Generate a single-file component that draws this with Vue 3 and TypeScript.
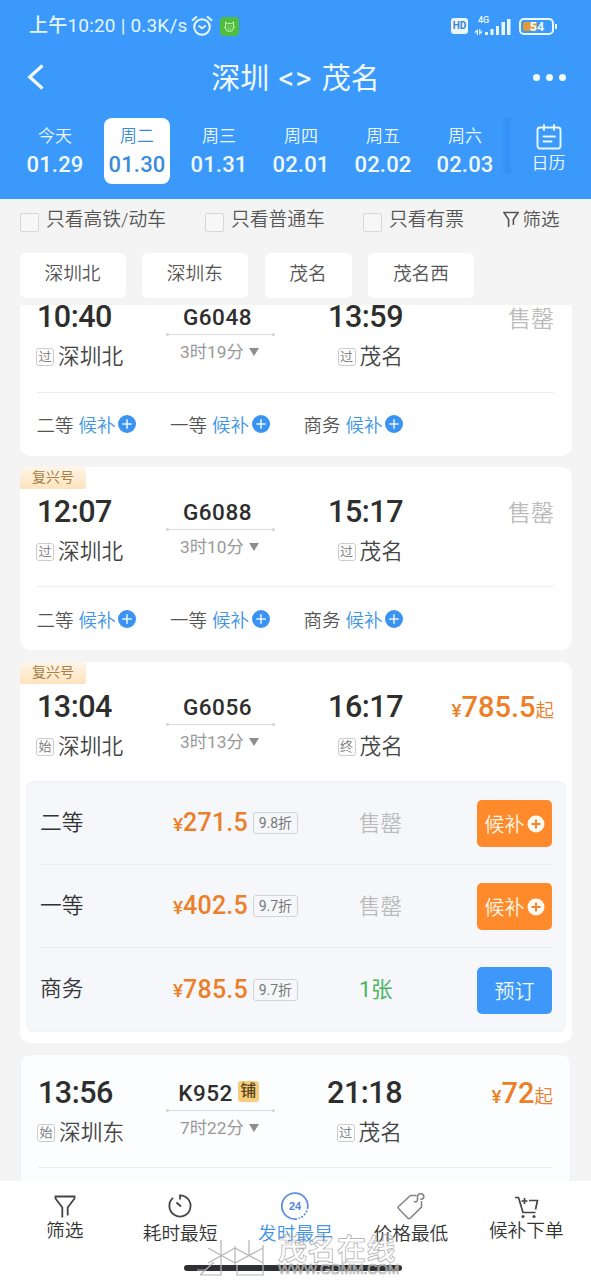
<script setup lang="ts">
interface Day { label: string; date: string; active?: boolean }
interface Seat { name: string; price: string; discount: string; left: string; available: boolean }
interface Train {
  id: string
  suffix?: string
  depart: string
  arrive: string
  from: string
  fromMark: string
  to: string
  toMark: string
  duration: string
  price?: string
  fuxing?: boolean
  kind: 'clipped' | 'waitlist' | 'expanded' | 'viewed'
  seats?: Seat[]
}

const days: Day[] = [
  { label: '今天', date: '01.29' },
  { label: '周二', date: '01.30', active: true },
  { label: '周三', date: '01.31' },
  { label: '周四', date: '02.01' },
  { label: '周五', date: '02.02' },
  { label: '周六', date: '02.03' },
]

const filters = ['只看高铁/动车', '只看普通车', '只看有票']
const stations = ['深圳北', '深圳东', '茂名', '茂名西']
const classes = ['二等', '一等', '商务']

const trains: Train[] = [
  { id: 'G6048', depart: '10:40', arrive: '13:59', from: '深圳北', fromMark: '过', to: '茂名', toMark: '过', duration: '3时19分', kind: 'clipped' },
  { id: 'G6088', depart: '12:07', arrive: '15:17', from: '深圳北', fromMark: '过', to: '茂名', toMark: '过', duration: '3时10分', fuxing: true, kind: 'waitlist' },
  {
    id: 'G6056', depart: '13:04', arrive: '16:17', from: '深圳北', fromMark: '始', to: '茂名', toMark: '终', duration: '3时13分', price: '785.5', fuxing: true, kind: 'expanded',
    seats: [
      { name: '二等', price: '271.5', discount: '9.8折', left: '售罄', available: false },
      { name: '一等', price: '402.5', discount: '9.7折', left: '售罄', available: false },
      { name: '商务', price: '785.5', discount: '9.7折', left: '1张', available: true },
    ],
  },
  { id: 'K952', suffix: '铺', depart: '13:56', arrive: '21:18', from: '深圳东', fromMark: '始', to: '茂名', toMark: '过', duration: '7时22分', price: '72', kind: 'viewed' },
]
</script>

<template>
  <div class="screen">
    <header class="header">
      <div class="status">
        <span class="clock">上午10:20 | 0.3K/s</span>
        <svg class="alarm" width="22" height="22" viewBox="0 0 22 22" fill="none" stroke="#e9f8ff" stroke-width="2" stroke-linecap="round">
          <circle cx="11" cy="12" r="7.8" />
          <path d="M1.500 5.200 5.300 2M20.500 5.200 16.700 2" />
          <path d="m8 11 3 2.300 3.200-2.300" stroke-width="1.800" />
        </svg>
        <svg class="app-badge" width="19" height="19" viewBox="0 0 19 19" fill="none">
          <rect width="19" height="19" rx="4" fill="#50bd3e" />
          <g stroke="#c9f5b8" stroke-width="1">
            <path d="M5.500 5v5.500a4 4 0 0 0 8 0V5l-2 1.500h-4zM4 10.500h1.500M13.500 10.500H15" />
            <path d="M7.500 9h1M10.500 9h1M8 11.500c1 .800 2 .800 3 0" />
          </g>
        </svg>
        <span class="grow"></span>
        <span class="hd">HD</span>
        <span class="cell">
          <span class="net">4G</span>
          <svg width="38" height="17" viewBox="0 0 38 17" fill="#e9f8ff">
            <path d="M4 11v6h-1.200v-2.500H0zM5.200 17v-6h1.200v2.500H9z" />
            <rect x="11" y="14" width="3" height="3" />
            <rect x="16.500" y="11" width="3" height="6" />
            <rect x="22" y="8" width="3" height="9" />
            <rect x="27.500" y="4" width="3.500" height="13" />
            <rect x="33" y="1" width="3.500" height="16" />
          </svg>
        </span>
        <span class="battery"><span class="charge"></span><b>54</b></span>
      </div>

      <div class="title-bar">
        <svg width="18" height="26" viewBox="0 0 18 26" fill="none" stroke="#f2fbff" stroke-width="3.200">
          <path d="M16.500 1.500 3.700 13 16.500 24.500" />
        </svg>
        <h1>深圳 <span class="swap">&lt;&gt;</span> 茂名</h1>
        <div class="more"><i></i><i></i><i></i></div>
      </div>

      <div class="days">
        <div v-for="d in days" :key="d.date" class="day" :class="{ active: d.active }">
          <span class="week">{{ d.label }}</span>
          <span class="date">{{ d.date }}</span>
        </div>
        <div class="calendar">
          <svg width="26" height="26" viewBox="0 0 26 26" fill="none" stroke="#e9f8ff" stroke-width="1.900" stroke-linecap="round">
            <rect x="1.500" y="3.500" width="23" height="21" rx="2.500" />
            <path d="M8 1v5M18 1v5M7.500 12.500h11.500M7.500 17.500h8" />
          </svg>
          <span>日历</span>
        </div>
      </div>
    </header>

    <div class="filters">
      <label v-for="f in filters" :key="f" class="check"><i></i>{{ f }}</label>
      <span class="more-filter">
        <svg width="16" height="17" viewBox="0 0 16 17" fill="none" stroke="#555" stroke-width="1.600">
          <path d="M5.600 16V8.500L1 1.500h14l-4.600 7V14" />
        </svg>筛选
      </span>
    </div>

    <div class="chips">
      <span v-for="s in stations" :key="s" class="chip">{{ s }}</span>
    </div>

    <main class="list">
      <section v-for="t in trains" :key="t.id" class="card" :class="t.kind">
        <span v-if="t.fuxing" class="tag">复兴号</span>
        <div class="trip">
          <div class="stop">
            <b>{{ t.depart }}</b>
            <span class="place"><i>{{ t.fromMark }}</i>{{ t.from }}</span>
          </div>
          <div class="route">
            <span class="number">{{ t.id }}<em v-if="t.suffix">{{ t.suffix }}</em></span>
            <span class="track"></span>
            <span class="duration">{{ t.duration }}<i></i></span>
          </div>
          <div class="stop end">
            <b>{{ t.arrive }}</b>
            <span class="place"><i>{{ t.toMark }}</i>{{ t.to }}</span>
          </div>
          <div v-if="t.price" class="fare"><small>¥</small><b>{{ t.price }}</b><span>起</span></div>
          <div v-else class="sold">售罄</div>
        </div>

        <div v-if="t.seats" class="panel">
          <div v-for="s in t.seats" :key="s.name" class="seat">
            <span class="seat-name">{{ s.name }}</span>
            <span class="seat-price"><small>¥</small><b>{{ s.price }}</b><i>{{ s.discount }}</i></span>
            <span class="seat-left" :class="{ ok: s.available }">{{ s.left }}</span>
            <button v-if="s.available" class="btn book">预订</button>
            <button v-else class="btn">候补<svg width="18" height="18" viewBox="0 0 18 18">
              <circle cx="9" cy="9" r="8.500" fill="#fffaf0" />
              <path d="M9 4.500v9M4.500 9h9" stroke="#f5862b" stroke-width="2" />
            </svg></button>
          </div>
        </div>

        <div v-else-if="t.kind !== 'viewed'" class="classes">
          <span v-for="c in classes" :key="c" class="class">{{ c }}<a>候补</a><svg width="18" height="18" viewBox="0 0 19 19">
            <circle cx="9.500" cy="9.500" r="9.500" fill="#3a93f0" />
            <path d="M9.500 4.500v10M4.500 9.500h10" stroke="#e6f5ff" stroke-width="1.600" />
          </svg></span>
        </div>
      </section>
    </main>

    <nav class="tabs">
      <div class="tab high">
        <svg width="30" height="30" viewBox="0 0 30 30" fill="none" stroke="#444" stroke-width="1.800">
          <path d="M12.300 26.500V16.500L5.500 7.500V5.500h19v2l-6.800 9v8" />
        </svg>
        <span>筛选</span>
      </div>
      <div class="tab">
        <svg width="30" height="30" viewBox="0 0 30 30" fill="none" stroke="#444" stroke-width="1.800">
          <path d="M15 8.500V4.300A10.600 10.600 0 1 1 8 6.900M11.500 11.500l4.500 4" />
        </svg>
        <span>耗时最短</span>
      </div>
      <div class="tab on">
        <svg width="30" height="30" viewBox="0 0 30 30" fill="none" stroke="#5f8fe0" stroke-width="1.800">
          <path d="M17 27.900A13 13 0 1 1 27.500 18" />
          <path d="M27 19.500a13 13 0 0 1-8.500 8" stroke-dasharray="2 1.500" />
          <text x="15" y="19" text-anchor="middle" font-family="Liberation Sans, sans-serif" font-weight="700" font-size="11" fill="#5585d8" stroke="none">24</text>
        </svg>
        <span>发时最早</span>
      </div>
      <div class="tab">
        <svg width="30" height="30" viewBox="0 0 30 30" fill="none" stroke="#858585" stroke-width="1.600" stroke-linecap="round" stroke-linejoin="round">
          <path d="M20 4.500h-5.500L2.500 15.500a1.500 1.500 0 0 0 0 2l9.500 9.700a1.500 1.500 0 0 0 2.100 0l11.400-11v-5.500" />
          <path d="M18.500 10.500c1.500.800 3 .200 3-1.700V5.500c0-4 6.300-3.500 6.300 0 0 2.200-1.800 2.700-3 2.700" />
        </svg>
        <span>价格最低</span>
      </div>
      <div class="tab high">
        <svg width="30" height="30" viewBox="0 0 30 30" fill="none" stroke="#444" stroke-width="1.700">
          <path d="M4 6.500h3.500L12 21.500h12.500M18 9.500H26.500L24.500 18.500" />
          <path d="M10.500 10h6M13.500 7v6" />
          <circle cx="12" cy="25.500" r="1.500" fill="#444" stroke="none" />
          <circle cx="23" cy="25.500" r="1.500" fill="#444" stroke="none" />
        </svg>
        <span>候补下单</span>
      </div>
    </nav>

    <div class="home-bar"></div>
    <div class="watermark">
      <svg width="72" height="38" viewBox="0 0 72 38" fill="none" stroke="#b5b5b5" stroke-width="1.200">
        <path d="M14 10 41 25M14 25 41 10M27 2v35H6M41 8v19M41 10l28 15M41 25l28-15M55 2v15M69 7v30H43V27M6 37l14-13M3 32h9" />
      </svg>
      <div class="mark-text"><span>茂名在线</span><small>WWW.GDMM.COM</small></div>
    </div>
  </div>
</template>

<style>
body { background: #f4f4f4; }
</style>

<style scoped>
.screen {
  position: relative;
  width: 591px;
  height: 1280px;
  overflow: hidden;
  display: flex;
  flex-direction: column;
  background: #f4f4f4;
  color: #333;
  font-family: Roboto, "Noto Sans CJK SC", sans-serif;
  font-weight: 350;
}
i, em { font-style: normal; }
.screen svg { flex: none; display: block; }
.header { height: 199px; flex: none; background: #3b99fc; color: #f0faff; }
.status { height: 52px; box-sizing: border-box; padding: 0 37px 0 29px; display: flex; align-items: center; }
.clock { font-size: 19px; font-weight: 450; letter-spacing: 0.200px; line-height: 22px; white-space: nowrap; color: #e4f6ff; width: 162px; }
.app-badge { margin-left: 7px; }
.grow { flex: 1; }
.hd { width: 17px; height: 16px; border-radius: 3px; background: #e9f8ff; color: #3b83cc; font-size: 10px; line-height: 16px; font-weight: 700; text-align: center; }
.cell { position: relative; width: 38px; margin-left: 6px; }
.net { position: absolute; left: 4px; top: -3px; font-size: 9px; line-height: 10px; font-weight: 500; }
.battery { position: relative; width: 35px; height: 17px; box-sizing: border-box; margin-left: 7px; border: 2px solid #e9f8ff; border-radius: 5px; }
.battery::after { content: ""; position: absolute; right: -5px; top: 4px; width: 2px; height: 5px; background: #e9f8ff; }
.charge { position: absolute; left: 2px; top: 2px; bottom: 2px; width: 14px; border-radius: 2px; background: #e09b3c; }
.battery b { position: absolute; inset: 0; text-align: center; font-size: 12.500px; line-height: 14px; font-weight: 700; padding-left: 1px; }
.title-bar { height: 50px; padding: 0 25px 0 26px; display: flex; align-items: center; justify-content: space-between; }
.title-bar h1 { margin: 0 0 0 14px; padding-top: 4px; font-size: 29px; line-height: 46px; font-weight: 400; white-space: nowrap; }
.swap { font-size: 31px; letter-spacing: 1px; margin: 0 2px; }
.more { display: flex; gap: 6px; }
.more i { width: 7px; height: 7px; border-radius: 50%; background: #f2fbff; }
.days { display: flex; padding: 16px 0 0 14px; }
.day { width: 66px; height: 66px; margin: 0 8px; border-radius: 8px; display: flex; flex-direction: column; align-items: center; }
.week { font-size: 17px; line-height: 24px; margin-top: 6px; }
.date { font-size: 22px; line-height: 34px; font-weight: 500; letter-spacing: 0.200px; }
.active { background: #fff; color: #3b8bdc; }
.calendar { width: 88px; margin-left: -5px; height: 56px; display: flex; flex-direction: column; align-items: center; padding: 6px 0 0 7px; box-sizing: border-box; background: linear-gradient(90deg, rgba(35, 125, 230, 0), rgba(35, 125, 230, .35) 7px, rgba(35, 125, 230, 0) 12px); font-size: 17px; line-height: 26px; }
.filters { height: 54px; flex: none; box-sizing: border-box; padding: 0 31px 12px 20px; display: flex; align-items: center; font-size: 18.750px; line-height: 24px; color: #555; }
.check { display: flex; align-items: center; width: 185px; white-space: nowrap; }
.check:nth-child(2) { width: 158px; }
.check:nth-child(3) { width: 140px; }
.check i { width: 19px; height: 19px; box-sizing: border-box; border: 1.500px solid #d8d8d8; border-radius: 2px; margin: 4px 7px 0 0; background: #f7f7f7; }
.more-filter { display: flex; align-items: center; gap: 3.500px; white-space: nowrap; font-size: 18.500px; }
.more-filter svg { margin-bottom: 1px; }
.chips { display: flex; flex: none; height: 52px; padding: 0 20px; gap: 16.300px; }
.chip { height: 45px; padding: 0 25.500px 0 24.500px; border-radius: 6px; background: #fff; font-size: 18.700px; line-height: 43px; color: #555; }
.list { height: 876px; flex: none; overflow: hidden; padding: 0 19px 0 20px; }
.card { position: relative; height: 183px; margin-bottom: 12px; border-radius: 10px; background: #fff; }
.clipped { margin-top: -33px; height: 184px; margin-bottom: 11px; }
.tag { position: absolute; left: 0; top: 0; width: 66px; height: 22px; border-radius: 8px 0 2px 0; background: linear-gradient(#fff5e8, #fde3bd); color: #a88048; font-size: 14px; line-height: 21px; text-align: center; font-weight: 400; }
.trip { display: grid; grid-template-columns: 129px 109px 128px 1fr; height: 120px; box-sizing: border-box; padding: 23px 0 0; margin: 0 18px 0 17px; border-bottom: 1px solid #ececec; }
.clipped .trip { height: 121px; }
.stop { display: flex; flex-direction: column; }
.stop b { font-size: 30.500px; line-height: 44px; font-weight: 500; letter-spacing: -0.500px; color: #2e2e2e; }
.end { align-items: flex-end; }
.place { display: flex; align-items: center; font-size: 21.700px; line-height: 36px; color: #444; white-space: nowrap; }
.place i { width: 18px; height: 18px; box-sizing: border-box; border: 1px solid #ccc; border-radius: 3px; font-size: 13px; line-height: 16px; text-align: center; color: #777; margin: 0 4px 0 -1px; }
.route { display: flex; flex-direction: column; align-items: stretch; padding-top: 6px; }
.number { display: flex; justify-content: center; align-items: center; font-size: 22.500px; line-height: 33px; height: 33px; font-weight: 500; letter-spacing: 0.500px; color: #2e2e2e; margin-left: -6px; }
.number em { width: 21px; height: 21px; margin: -4px 0 0 5px; border-radius: 3px; background: #f6cd7c; color: #5a4520; font-size: 16px; line-height: 20px; text-align: center; letter-spacing: 0; }
.track { position: relative; height: 1px; background: #dcdcdc; }
.track::before, .track::after { content: ""; position: absolute; top: -1px; width: 3px; height: 3px; border-radius: 50%; background: #d4d4d4; }
.track::before { left: 0; }
.track::after { right: 0; }
.duration { display: flex; align-items: center; font-size: 17.300px; line-height: 34px; font-weight: 380; color: #999; padding-left: 14px; white-space: nowrap; }
.duration i { margin-left: 5px; border: 5.500px solid transparent; border-top: 8px solid #8e8e8e; border-bottom: 0; }
.sold { text-align: right; font-size: 23px; line-height: 48px; color: #bbb; }
.clipped .sold { line-height: 50px; }
.fare { display: flex; justify-content: flex-end; align-items: baseline; color: #ec7f28; line-height: 45px; }
.fare small { font-size: 19px; font-weight: 500; }
.fare b { font-size: 29px; font-weight: 500; }
.fare span { font-size: 18.500px; }
.classes { display: flex; padding-left: 16.500px; height: 64px; }
.clipped .classes { height: 62px; }
.class { width: 133.500px; display: flex; align-items: center; font-size: 18.500px; color: #555; }
.class svg { margin-bottom: 1px; }
.class a { color: #3c94e8; margin: 0 2.500px 0 5px; }
.expanded { height: 381px; margin-bottom: 11px; }
.expanded .trip { height: 119px; border-bottom: 0; }
.panel { margin: 0 6px; height: 251px; box-sizing: border-box; border: 1px solid #f0f2f5; border-radius: 8px; background: #f6f7fb; padding: 0 13px; }
.seat { height: 83px; box-sizing: border-box; border-bottom: 1px solid #e9ebef; display: grid; grid-template-columns: 133px 186px 1fr 75px; align-items: center; }
.seat:last-child { border-bottom: 0; }
.seat-name { font-size: 21.700px; color: #333; line-height: 28px; padding-bottom: 1px; }
.seat-price { display: flex; align-items: center; color: #ec7f28; }
.seat-price small { font-size: 19px; font-weight: 500; padding-top: 2px; }
.seat-price b { font-size: 25px; font-weight: 500; letter-spacing: 0.200px; line-height: 28px; }
.seat-price i { margin-left: 5px; width: 45px; height: 22px; box-sizing: border-box; border: 1px solid #d4d4d8; border-radius: 3px; color: #777; font-size: 14px; line-height: 20px; font-weight: 400; text-align: center; }
.seat-left { font-size: 21.500px; color: #bbb; line-height: 28px; padding-top: 2px; }
.seat-left.ok { color: #49b35d; font-weight: 400; padding-top: 1px; }
.btn { width: 75px; height: 47px; padding: 0; border: 0; border-radius: 5px; background: #ff8a2b; color: #fff6e8; font: inherit; font-size: 20px; display: flex; align-items: center; justify-content: center; gap: 2px; margin-top: 1px; }
.book { background: #3d98fa; color: #f0faff; }
.viewed { background: #fcfdff; height: 183px; margin: 0 1px 0 0; border: 1px solid #f0f1f3; box-sizing: border-box; }
.viewed .trip { height: 113px; padding-top: 16px; margin-right: 17px; }
.viewed .route { margin: 0 1px 0 -1px; }
.viewed .number { margin-left: -4px; }
.viewed .end { padding-right: 2px; }
.tabs { height: 99px; flex: none; box-sizing: border-box; padding: 10px 7px 0; background: #fff; display: grid; grid-template-columns: repeat(5, 1fr); }
.tab { display: flex; flex-direction: column; align-items: center; font-size: 18.700px; line-height: 27px; color: #333; }
.tab span { margin-top: 0; }
.high span { margin-top: -3px; }
.on { color: #3f95e6; }
.home-bar { position: absolute; left: 184px; top: 1265px; width: 218px; height: 6px; border-radius: 3px; background: #2f3033; }
.watermark { position: absolute; left: 194px; top: 1238px; display: flex; gap: 12px; color: transparent; }
.mark-text { display: flex; flex-direction: column; font-weight: 700; -webkit-text-stroke: 0.700px #aaa; }
.mark-text span { font-size: 29px; line-height: 25px; letter-spacing: 0.500px; }
.mark-text small { font: 14px/13px "Liberation Sans", sans-serif; letter-spacing: -0.200px; color: rgba(255, 255, 255, .35); }
</style>
